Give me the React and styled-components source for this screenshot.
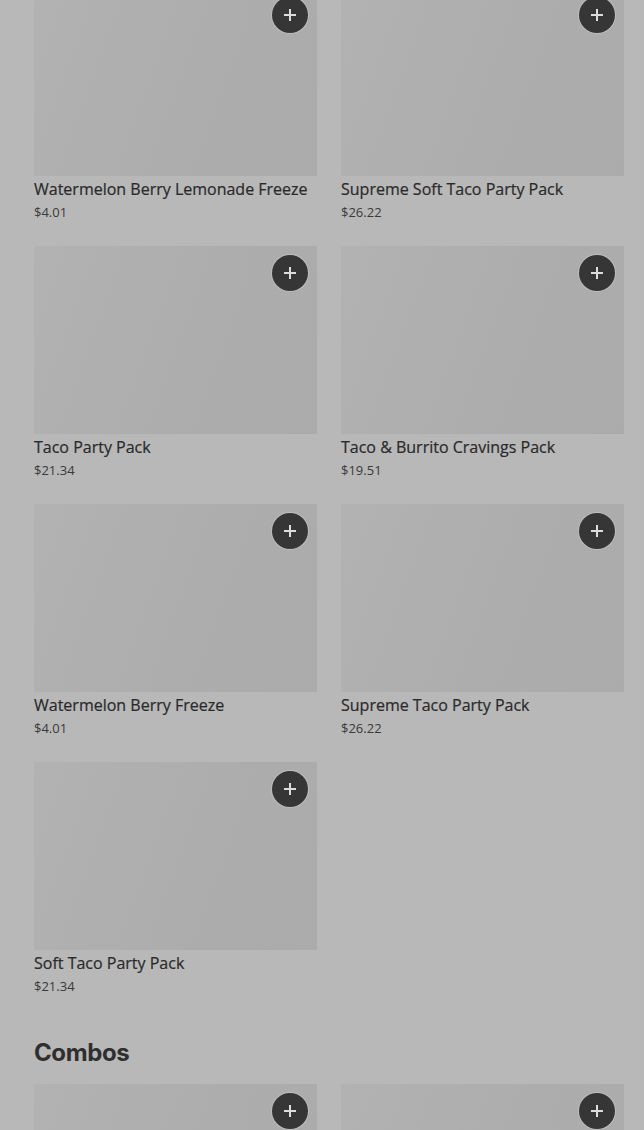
import React from 'react'
import styled, { createGlobalStyle } from 'styled-components'

const GlobalStyle = createGlobalStyle`
  html, body {
    margin: 0;
    padding: 0;
    background: #b8b8b8;
    overflow: hidden;
  }
`

const Page = styled.div`
  padding: 0 20px 0 34px;
  margin-top: -12px;
  height: 1142px;
  overflow: hidden;
  font-family: "Open Sans", "Liberation Sans", sans-serif;
  color: #2a2a2a;
`

const Grid = styled.div`
  display: grid;
  grid-template-columns: 283px 283px;
  column-gap: 24px;
  row-gap: 25px;
`

const Card = styled.div`
  display: flex;
  flex-direction: column;
`

const Thumb = styled.div`
  position: relative;
  height: 188px;
  background: linear-gradient(110deg, #b2b2b2 0%, #adadad 55%, #ababab 100%);
`

const AddButton = styled.button`
  position: absolute;
  top: 9px;
  right: 9px;
  width: 36px;
  height: 36px;
  border-radius: 50%;
  border: none;
  padding: 0;
  background: #363636;
  display: flex;
  align-items: center;
  justify-content: center;
  box-shadow: 0 0 0 1px #bdbdbd;
`

const Title = styled.div`
  margin-top: 2px;
  font-size: 16px;
  font-weight: 500;
  line-height: 22px;
  white-space: nowrap;
  -webkit-text-stroke: 0.2px #2a2a2a;
`

const Price = styled.div`
  margin-top: 3px;
  font-size: 13px;
  line-height: 18px;
  color: #3a3a3a;
`

const Heading = styled.h2`
  margin: 42px 0 15px;
  font-family: Inter, "Liberation Sans", sans-serif;
  font-size: 24px;
  font-weight: 700;
  line-height: 32px;
  letter-spacing: -0.4px;
  color: #2f2f2f;
`

const Plus = () => (
  <svg width="14" height="14" viewBox="0 0 14 14">
    <path d="M7 2v10M2 7h10" stroke="#dcdcdc" strokeWidth="2" strokeLinecap="square" />
  </svg>
)

const items = [
  { name: 'Watermelon Berry Lemonade Freeze', price: '$4.01' },
  { name: 'Supreme Soft Taco Party Pack', price: '$26.22' },
  { name: 'Taco Party Pack', price: '$21.34' },
  { name: 'Taco & Burrito Cravings Pack', price: '$19.51' },
  { name: 'Watermelon Berry Freeze', price: '$4.01' },
  { name: 'Supreme Taco Party Pack', price: '$26.22' },
  { name: 'Soft Taco Party Pack', price: '$21.34' },
]

const Item = ({ name, price }) => (
  <Card>
    <Thumb>
      <AddButton aria-label="Add">
        <Plus />
      </AddButton>
    </Thumb>
    {name && <Title>{name}</Title>}
    {price && <Price>{price}</Price>}
  </Card>
)

export default function App() {
  return (
    <>
      <GlobalStyle />
      <Page>
        <Grid>
          {items.map((it, i) => (
            <Item key={i} {...it} />
          ))}
        </Grid>
        <Heading>Combos</Heading>
        <Grid>
          <Item />
          <Item />
        </Grid>
      </Page>
    </>
  )
}
